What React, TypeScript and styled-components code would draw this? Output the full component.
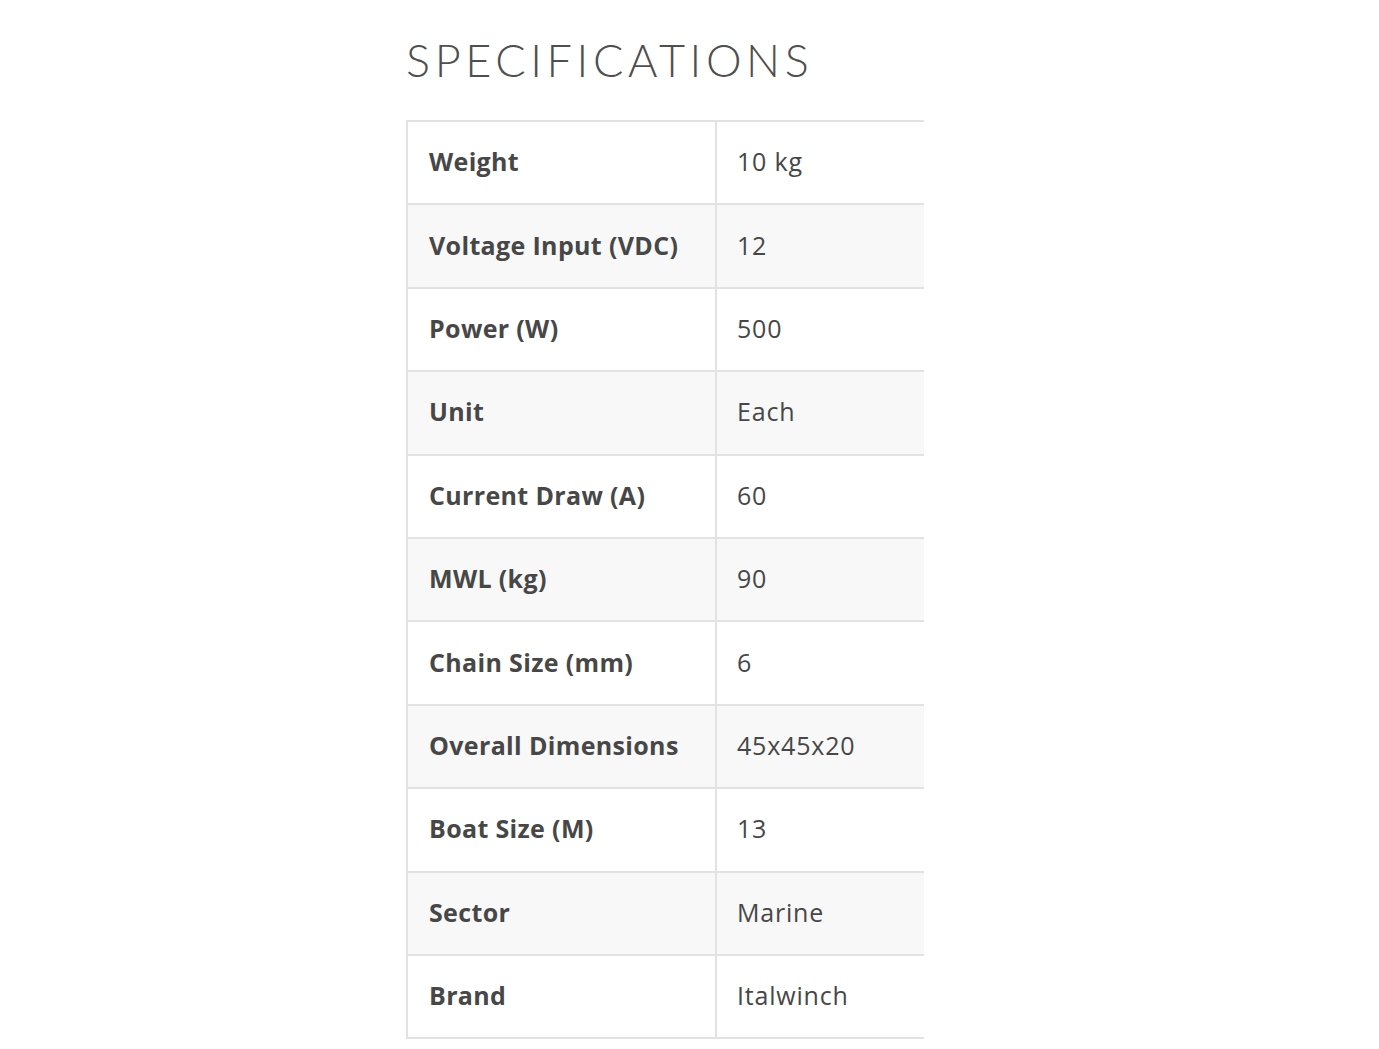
import React from "react";
import styled, { createGlobalStyle } from "styled-components";

const Global = createGlobalStyle`
  html, body { margin: 0; padding: 0; background: #ffffff; }
  body { font-family: "Open Sans", "Lato", sans-serif; color: #4a4a4a; }
`;

const Page = styled.div`
  padding: 36px 0 0 406px;
`;

const Heading = styled.h2`
  margin: 0 0 36px 0;
  font-family: "Lato", sans-serif;
  font-weight: 300;
  font-size: 45px;
  line-height: 48px;
  letter-spacing: 4.6px;
  color: #4f4f4f;
`;

const TableClip = styled.div`
  width: 518px;
  overflow: hidden;
`;

const Table = styled.table`
  width: 620px;
  table-layout: fixed;
  border-collapse: collapse;
  border-top: 2px solid #e2e2e2;
  border-left: 2px solid #e2e2e2;
`;

const LabelCol = styled.col`
  width: 309px;
`;

const Row = styled.tr<{ $shade: boolean }>`
  background: ${(p) => (p.$shade ? "#f8f8f8" : "#ffffff")};
  border-bottom: 2px solid #e2e2e2;
`;

const Label = styled.th`
  height: 78.4px;
  padding: 0 0 3px 21px;
  text-align: left;
  font-family: "Open Sans", sans-serif;
  font-weight: 700;
  font-size: 25px;
  letter-spacing: 0.35px;
  color: #474747;
  border-right: 2px solid #e2e2e2;
  vertical-align: middle;
  white-space: nowrap;
`;

const Value = styled.td`
  padding: 0 0 3px 20px;
  font-family: "Open Sans", sans-serif;
  font-weight: 400;
  font-size: 25px;
  letter-spacing: 0.8px;
  color: #474747;
  vertical-align: middle;
`;

const specs: [string, string][] = [
  ["Weight", "10 kg"],
  ["Voltage Input (VDC)", "12"],
  ["Power (W)", "500"],
  ["Unit", "Each"],
  ["Current Draw (A)", "60"],
  ["MWL (kg)", "90"],
  ["Chain Size (mm)", "6"],
  ["Overall Dimensions", "45x45x20"],
  ["Boat Size (M)", "13"],
  ["Sector", "Marine"],
  ["Brand", "Italwinch"],
];

export default function App() {
  return (
    <Page>
      <Global />
      <Heading>SPECIFICATIONS</Heading>
      <TableClip>
        <Table>
          <colgroup>
            <LabelCol />
            <col />
          </colgroup>
          <tbody>
            {specs.map(([k, v], i) => (
              <Row key={k} $shade={i % 2 === 1}>
                <Label>{k}</Label>
                <Value>{v}</Value>
              </Row>
            ))}
          </tbody>
        </Table>
      </TableClip>
    </Page>
  );
}
